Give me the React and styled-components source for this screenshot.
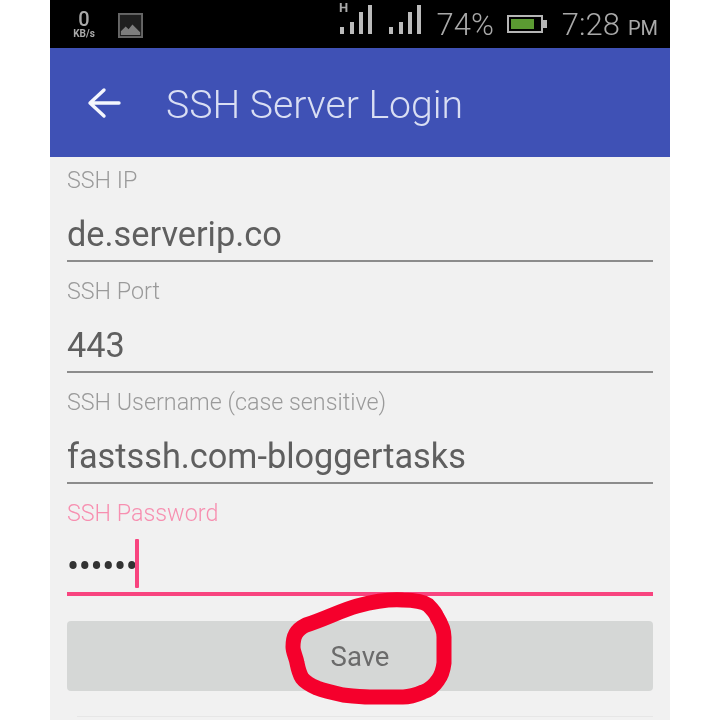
import React from 'react';
import styled, { createGlobalStyle } from 'styled-components';

const GlobalStyle = createGlobalStyle`
  html, body {
    margin: 0;
    background: #fff;
    font-family: Roboto, "Liberation Sans", sans-serif;
  }
`;

const Phone = styled.div`
  position: relative;
  width: 620px;
  height: 720px;
  margin-left: 50px;
  background: #f1f1f1;
  overflow: hidden;
`;

const StatusBar = styled.div`
  display: flex;
  align-items: center;
  height: 48px;
  padding: 0 12px 0 22px;
  box-sizing: border-box;
  background: #000;
  color: #a9a9a9;
  filter: blur(0.5px);
`;

const Speed = styled.div`
  display: flex;
  flex-direction: column;
  align-items: center;
  width: 24px;
  margin-right: 22px;
  font-size: 20px;
  line-height: 18px;
  font-weight: 500;
  span {
    font-size: 10px;
    line-height: 11px;
    font-weight: 700;
  }
`;

const Spacer = styled.div`
  flex: 1;
`;

const PictureIcon = styled.svg`
  margin-top: 2px;
`;

const SignalIcon = styled.svg`
  align-self: flex-start;
  margin-left: 15px;
`;

const Percent = styled.span`
  font-size: 31px;
  font-weight: 300;
  margin: 0 13px 0 15px;
`;

const Clock = styled.span`
  font-size: 31px;
  font-weight: 300;
  margin-left: 14px;
  small {
    font-size: 20px;
    font-weight: 400;
    margin-left: 8px;
  }
`;

const AppBar = styled.header`
  display: flex;
  align-items: center;
  height: 109px;
  padding-left: 36px;
  box-sizing: border-box;
  background: #3f51b5;
  color: #d9def3;
  filter: blur(0.4px);
`;

const Title = styled.h1`
  margin: 4px 0 0 44px;
  font-size: 39.2px;
  font-weight: 300;
`;

const Form = styled.form`
  display: flex;
  flex-direction: column;
  gap: 17px;
  padding: 11px 17px 0;
  filter: blur(0.4px);
`;

const Field = styled.div`
  display: flex;
  flex-direction: column;
`;

const Label = styled.label`
  height: 24px;
  font-size: 23.3px;
  line-height: 24px;
  font-weight: 300;
  color: ${(p) => (p.$active ? '#f78fb0' : '#9a9a9a')};
`;

const Value = styled.div`
  display: flex;
  align-items: center;
  height: ${(p) => (p.$active ? '71px' : '70px')};
  padding-top: 16px;
  box-sizing: border-box;
  border-bottom: ${(p) => (p.$active ? '4px solid #f8447f' : '2px solid #8c8c8c')};
  font-size: 34.3px;
  color: #5f5f5f;
`;

const Dots = styled.span`
  font-size: 36px;
  letter-spacing: -0.4px;
  color: #333;
`;

const Caret = styled.span`
  width: 4px;
  height: 49px;
  margin: -6px 0 0 -2px;
  border-radius: 1px;
  background: #f8447f;
`;

const SaveButton = styled.button`
  height: 70px;
  margin-top: 8px;
  border: none;
  border-radius: 4px;
  background: #d5d7d6;
  color: #6b6b6b;
  font-family: inherit;
  font-size: 27.5px;
`;

const Divider = styled.div`
  height: 1px;
  margin: 25px 17px 0 27px;
  background: #e6e6e6;
`;

const Scribble = styled.svg`
  position: absolute;
  left: 220px;
  top: 590px;
  pointer-events: none;
`;

const ImageIcon = () => (
  <PictureIcon width="25" height="25" viewBox="0 0 26 26">
    <rect x="1" y="1" width="24" height="24" fill="#1f1f1f" stroke="#666" strokeWidth="2" />
    <path d="M3 23 L3 19 L8 14 L11 17 L15 12 L23 20 L23 23 Z" fill="#7d7d7d" />
  </PictureIcon>
);

const Signal = ({ hd }) => (
  <SignalIcon width="34" height="38" viewBox="0 0 34 38">
    {hd && <text x="0" y="12" fontSize="13" fontWeight="700" fontFamily="Roboto" fill="#a9a9a9">H</text>}
    <rect x="1" y="27" width="4" height="7" fill="#bbb" />
    <rect x="11" y="22" width="4" height="12" fill="#bbb" />
    <rect x="20" y="12" width="4" height="22" fill="#bbb" />
    <rect x="29" y="5" width="4" height="29" fill="#bbb" />
  </SignalIcon>
);

const Battery = () => (
  <svg width="41" height="20" viewBox="0 0 41 20">
    <rect x="1" y="2" width="34" height="16" fill="none" stroke="#b5b5b5" strokeWidth="2" />
    <rect x="4" y="5" width="23" height="10" fill="#5b9a32" />
    <rect x="36" y="6" width="4" height="8" fill="#b5b5b5" />
  </svg>
);

const BackArrow = () => (
  <svg width="36" height="36" viewBox="0 0 36 36" fill="none" stroke="#f4f6fd" strokeWidth="3.4" strokeLinecap="round" strokeLinejoin="round">
    <path d="M33 18 H5 M18 5 L4 18 L18 31" />
  </svg>
);

const fields = [
  { label: 'SSH IP', value: 'de.serverip.co' },
  { label: 'SSH Port', value: '443' },
  { label: 'SSH Username (case sensitive)', value: 'fastssh.com-bloggertasks' },
];

export default function App() {
  return (
    <>
      <GlobalStyle />
      <Phone>
        <StatusBar>
          <Speed>
            0<span>KB/s</span>
          </Speed>
          <ImageIcon />
          <Spacer />
          <Signal hd />
          <Signal />
          <Percent>74%</Percent>
          <Battery />
          <Clock>
            7:28<small>PM</small>
          </Clock>
        </StatusBar>
        <AppBar>
          <BackArrow />
          <Title>SSH Server Login</Title>
        </AppBar>
        <Form onSubmit={(e) => e.preventDefault()}>
          {fields.map((f) => (
            <Field key={f.label}>
              <Label>{f.label}</Label>
              <Value>{f.value}</Value>
            </Field>
          ))}
          <Field>
            <Label $active>SSH Password</Label>
            <Value $active>
              <Dots>••••••</Dots>
              <Caret />
            </Value>
          </Field>
          <SaveButton type="button">Save</SaveButton>
        </Form>
        <Divider />
        <Scribble width="190" height="120" viewBox="270 590 190 120">
          <path
            d="M293 647 C293 636 296 630 306 625 C325 619 342 610 357 606 C372 602 390 599 403 600 C414 600 424 602 428 605 C433 610 436 614 437 617 C442 625 444 630 444 637 L444 663 C443 671 441 676 438 680 C434 686 429 690 423 692 C416 695 410 697 403 697 L370 697 C360 697 352 696 343 695 C334 693 325 691 317 688 C310 685 305 682 302 678 C299 673 298 668 297 663 C296 657 293 652 293 647 Z"
            fill="none"
            stroke="#f5002c"
            strokeWidth="15"
            strokeLinejoin="round"
          />
        </Scribble>
      </Phone>
    </>
  );
}
